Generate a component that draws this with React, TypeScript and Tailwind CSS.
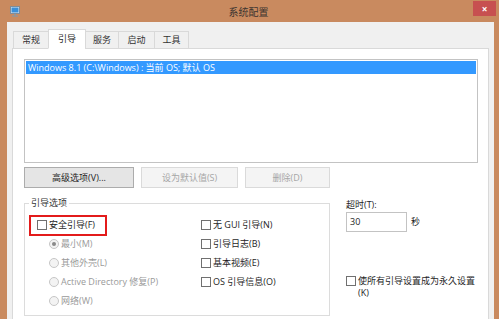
import { type ReactNode } from 'react';

const tabs = [
    { label: '常规', w: 'w-[36px]' },
    { label: '引导', w: 'w-[38px]', active: true },
    { label: '服务', w: 'w-[34px]' },
    { label: '启动', w: 'w-[37px]' },
    { label: '工具', w: 'w-[35px]' },
];

const CheckBox = () => (
    <span className="inline-block w-[10px] h-[10px] shrink-0 border border-[#707070] bg-white" />
);

const Radio = ({ checked }: { checked?: boolean }) => (
    <span className="w-[10px] h-[10px] shrink-0 rounded-full border border-[#c6c6c6] bg-[#f3f3f3] flex items-center justify-center">
        {checked && <span className="w-[4px] h-[4px] rounded-full bg-[#8a8a8a]" />}
    </span>
);

const CheckRow = ({ children }: { children: ReactNode }) => (
    <div className="h-[19px] flex items-center gap-[2px]">
        <CheckBox />
        <span>{children}</span>
    </div>
);

const RadioRow = ({ children, checked }: { children: ReactNode; checked?: boolean }) => (
    <div className="h-[19px] flex items-center gap-[2px] pl-[12px] text-[#9a9a9a]">
        <Radio checked={checked} />
        <span>{children}</span>
    </div>
);

const App = () => {
    return (
        <div className="w-[499px] h-[319px] bg-[#c98a5f] flex flex-col overflow-hidden font-['Open_Sans','Noto_Sans_CJK_SC',sans-serif] text-[9px] leading-[10px] text-[#1e1e1e]">
            {/* title bar */}
            <div className="h-[22px] shrink-0 flex items-start">
                <svg className="ml-[10px] mt-[6px]" width="10" height="11" viewBox="0 0 10 11">
                    <rect x="0.5" y="0.5" width="9" height="7" fill="#dfe6ee" stroke="#7f8c99" />
                    <rect x="1.5" y="1.5" width="7" height="5" fill="#3a8fd8" />
                    <rect x="4" y="8" width="2" height="1.5" fill="#8c96a0" />
                    <rect x="2" y="9.5" width="6" height="1.2" fill="#8c96a0" />
                </svg>
                <div className="flex-1 pt-[7px] pl-[4px] text-center text-[10px] text-[#3d3530]">系统配置</div>
                <div className="mt-px mr-[3px] w-[23px] h-[15px] bg-[#c75050] flex items-center justify-center text-white text-[10px] font-bold">
                    ×
                </div>
            </div>

            {/* client area */}
            <div className="flex-1 ml-[7px] mr-[5px] bg-[#f0f0f0] px-[5px] pt-[7px] flex flex-col">
                <div className="relative z-10 -mb-px h-[20px] pl-px flex items-end">
                    {tabs.map((t, i) => (
                        <div
                            key={t.label}
                            className={`${t.w} ${i > 0 ? '-ml-px' : ''} flex items-center justify-center border border-[#d9d9d9] ${t.active ? 'h-[20px] bg-white border-b-white' : 'h-[18px] bg-[#f0f0f0] text-[#333]'}`}
                        >
                            {t.label}
                        </div>
                    ))}
                </div>

                <div className="flex-1 bg-white border border-[#d9d9d9] border-b-0 pl-[11px] pr-[10px] pt-[10px]">
                    {/* os list */}
                    <div className="h-[104px] border border-[#c3c3c3] p-px">
                        <div className="h-[13px] bg-[#3399ff] text-white pl-[2px] flex items-center">
                            Windows 8.1 (C:\Windows) : 当前 OS; 默认 OS
                        </div>
                    </div>

                    {/* buttons */}
                    <div className="mt-[4px] flex h-[21px]">
                        <div className="w-[110px] border border-[#acacac] bg-[#e5e5e5] flex items-center justify-center">
                            高级选项(V)...
                        </div>
                        <div className="ml-[7px] w-[97px] border border-[#dadada] bg-[#f4f4f4] text-[#a6a6a6] flex items-center justify-center">
                            设为默认值(S)
                        </div>
                        <div className="ml-[7px] w-[85px] border border-[#dadada] bg-[#f4f4f4] text-[#a6a6a6] flex items-center justify-center">
                            删除(D)
                        </div>
                    </div>

                    <div className="mt-[10px] flex">
                        <fieldset className="w-[306px] h-[118px] border border-[#dcdcdc]">
                            <legend className="ml-[4px] px-[2px] text-[#333]">引导选项</legend>
                            <div className="pt-[7px] pl-[12px] flex">
                                <div className="w-[164px]">
                                    <div className="relative">
                                        <span className="absolute -left-[8px] top-0 w-[78px] h-[21px] border-2 border-[#e31b1b]" />
                                        <CheckRow>安全引导(F)</CheckRow>
                                    </div>
                                    <RadioRow checked>最小(M)</RadioRow>
                                    <RadioRow>其他外壳(L)</RadioRow>
                                    <RadioRow>Active Directory 修复(P)</RadioRow>
                                    <RadioRow>网络(W)</RadioRow>
                                </div>
                                <div>
                                    <CheckRow>无 GUI 引导(N)</CheckRow>
                                    <CheckRow>引导日志(B)</CheckRow>
                                    <CheckRow>基本视频(E)</CheckRow>
                                    <CheckRow>OS 引导信息(O)</CheckRow>
                                </div>
                            </div>
                        </fieldset>

                        <div className="ml-[16px] pt-[2px]">
                            <div>超时(T):</div>
                            <div className="mt-[2px] flex items-center">
                                <div className="w-[61px] h-[20px] border border-[#c3c3c3] bg-white pl-[3px] flex items-center">30</div>
                                <span className="ml-[4px]">秒</span>
                            </div>
                            <div className="mt-[43px] flex items-start gap-[2px]">
                                <span className="mt-px flex">
                                    <CheckBox />
                                </span>
                                <span className="w-[120px] leading-[12px]">使所有引导设置成为永久设置(K)</span>
                            </div>
                        </div>
                    </div>
                </div>
            </div>
        </div>
    );
};

export default App;
